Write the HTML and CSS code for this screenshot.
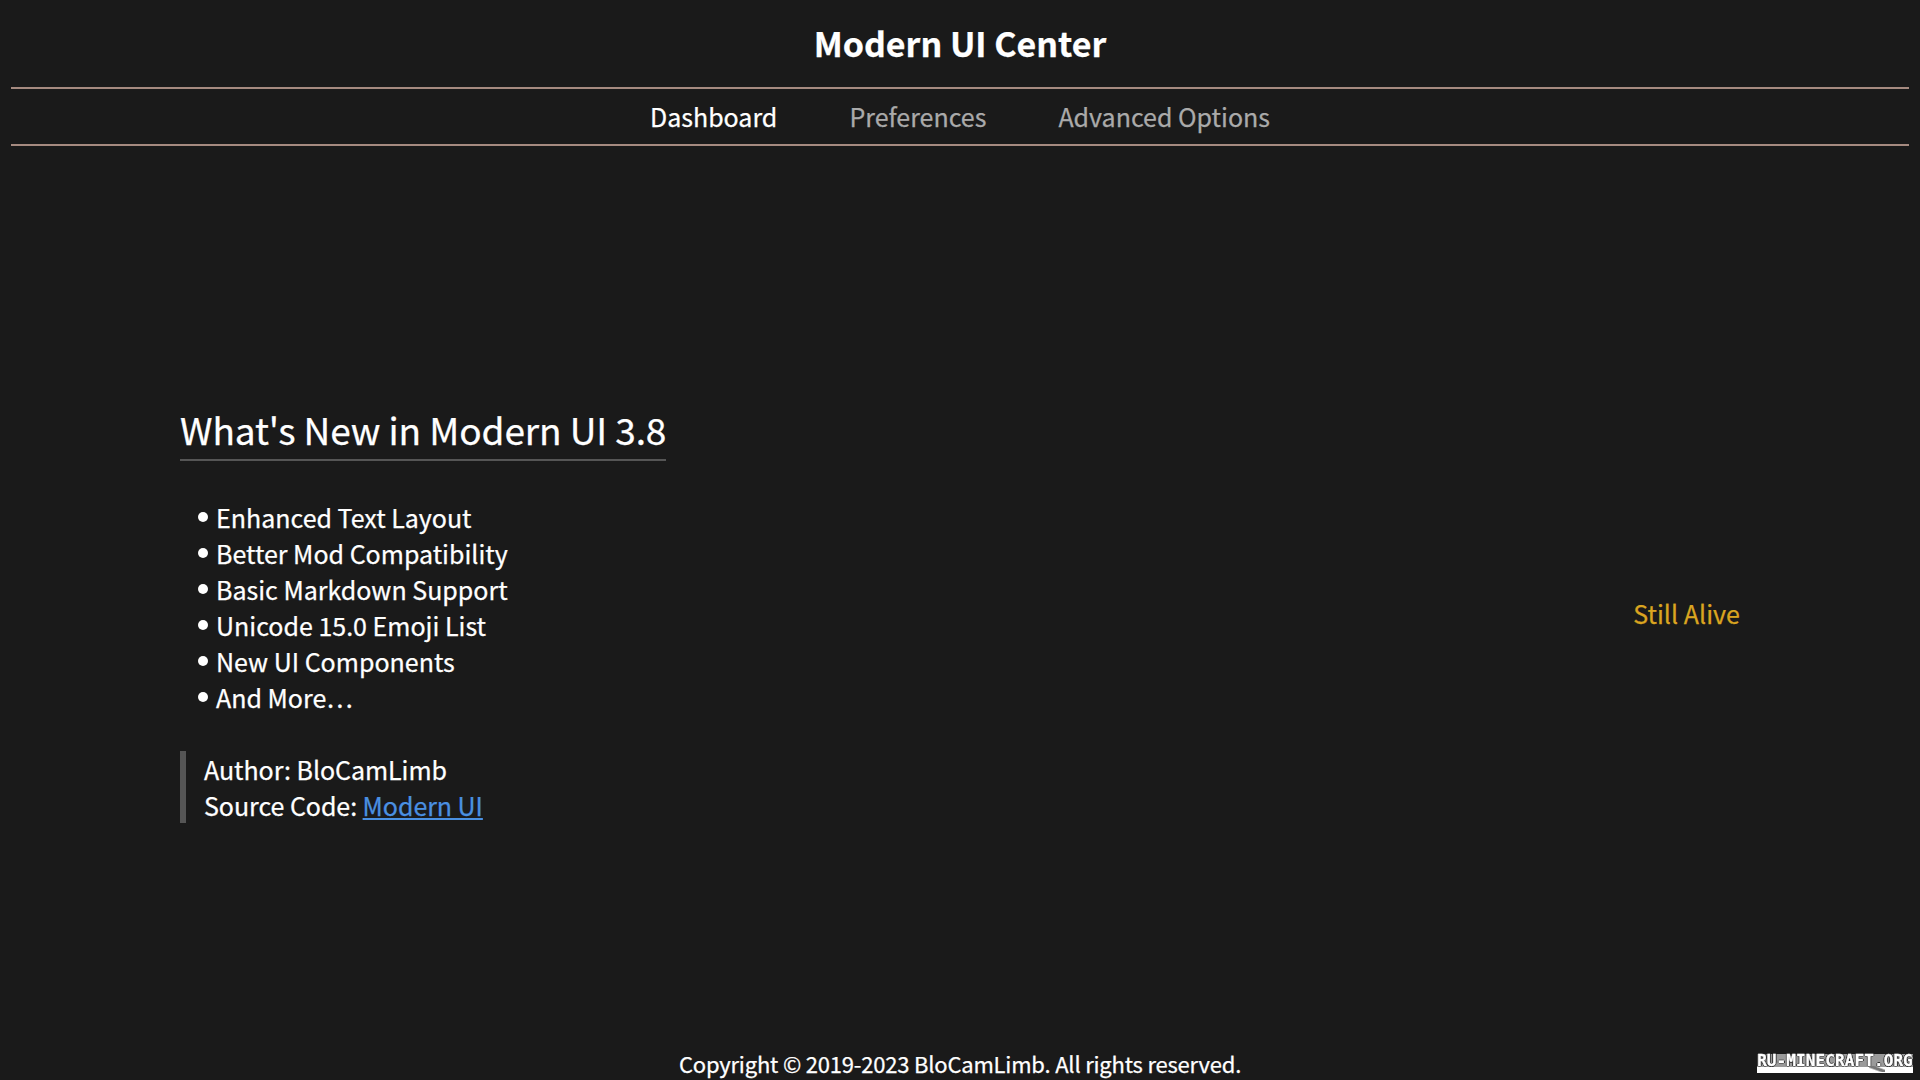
FILE: index.html
```html
<!DOCTYPE html>
<html lang="en">
<head>
  <meta charset="UTF-8" />
  <title>Modern UI Center</title>
  <link rel="stylesheet" href="styles.css">
</head>
<body>
  <header class="top">
    <h1 class="title">Modern UI Center</h1>
    <nav class="tabs">
      <span class="tab active">Dashboard</span>
      <span class="tab">Preferences</span>
      <span class="tab">Advanced Options</span>
    </nav>
  </header>

  <main class="content">
    <section class="news">
      <h2 class="news-title">What's New in Modern UI 3.8</h2>
      <ul class="news-list">
        <li>Enhanced Text Layout</li>
        <li>Better Mod Compatibility</li>
        <li>Basic Markdown Support</li>
        <li>Unicode 15.0 Emoji List</li>
        <li>New UI Components</li>
        <li>And More…</li>
      </ul>
      <blockquote class="credits">
        Author: BloCamLimb<br>
        Source Code: <a href="#">Modern UI</a>
      </blockquote>
    </section>
    <p class="status">Still Alive</p>
  </main>

  <footer class="bottom">
    <span class="copyright">Copyright © 2019-2023 BloCamLimb. All rights reserved.</span>
    <span class="badge">RU-MINECRAFT.ORG</span>
  </footer>
</body>
</html>
```

FILE: styles.css
```css
html, body {
  height: 100%;
}

body {
  margin: 0;
  background: #1a1a1a;
  color: #fff;
  font-family: "Noto Sans CJK SC", "Noto Sans", sans-serif;
  -webkit-text-stroke: 0.25px currentColor;
  display: flex;
  flex-direction: column;
  overflow: hidden;
}

.top {
  margin: 0 11px;
}

.title {
  margin: 0;
  height: 87px;
  line-height: 85px;
  font-size: 34px;
  font-weight: 700;
  text-align: center;
  border-bottom: 2px solid #a58a80;
}

.tabs {
  display: flex;
  justify-content: center;
  gap: 72px;
  height: 55px;
  line-height: 54px;
  font-size: 25px;
  border-bottom: 2px solid #a58a80;
}

.tab {
  color: #aaa;
}

.tab.active {
  color: #fff;
}

.content {
  flex: 1;
  display: flex;
  justify-content: space-between;
  align-items: center;
  padding: 0 180px;
}

.news-title {
  display: inline-block;
  margin: 0;
  padding-bottom: 3px;
  font-size: 37px;
  font-weight: 400;
  line-height: 53px;
  letter-spacing: -0.1px;
  border-bottom: 2px solid #555;
}

.news-list {
  list-style: none;
  margin: 38px 0 36px;
  padding: 0 0 0 36px;
  font-size: 25px;
  line-height: 36px;
}

.news-list li {
  position: relative;
}

.news-list li::before {
  content: "";
  position: absolute;
  left: -18px;
  top: 13px;
  width: 10px;
  height: 10px;
  border-radius: 50%;
  background: #fff;
}

.credits {
  margin: 0;
  padding-left: 18px;
  border-left: 6px solid #555;
  font-size: 25px;
  line-height: 36px;
  letter-spacing: -0.05px;
}

.credits a {
  color: #4a90e2;
}

.status {
  margin: 0;
  color: #daa520;
  font-size: 25px;
  letter-spacing: 0.05px;
}

.bottom {
  position: relative;
  height: 32px;
  margin-top: -32px;
  text-align: center;
  font-size: 22px;
  line-height: 30px;
}

.copyright {
  letter-spacing: -0.2px;
}

.badge {
  position: absolute;
  right: 7px;
  top: 6px;
  width: 156px;
  height: 19px;
  background: linear-gradient(#9a9a9a 13px, #fff 13px);
  color: #fff;
  font-family: "DejaVu Sans Mono", monospace;
  font-size: 16px;
  font-weight: 700;
  line-height: 13px;
  letter-spacing: 0.1px;
  text-align: center;
  -webkit-text-stroke: 0.4px #fff;
  text-shadow: 1px 0 #222, -1px 0 #222, 0 1px #222, 0 -1px #222;
  filter: blur(0.4px);
}

.badge::after {
  content: "";
  position: absolute;
  left: 112px;
  top: 12px;
  width: 16px;
  height: 6px;
  background: linear-gradient(20deg, transparent 30%, #777 45%, #777 60%, transparent 75%);
}
```
